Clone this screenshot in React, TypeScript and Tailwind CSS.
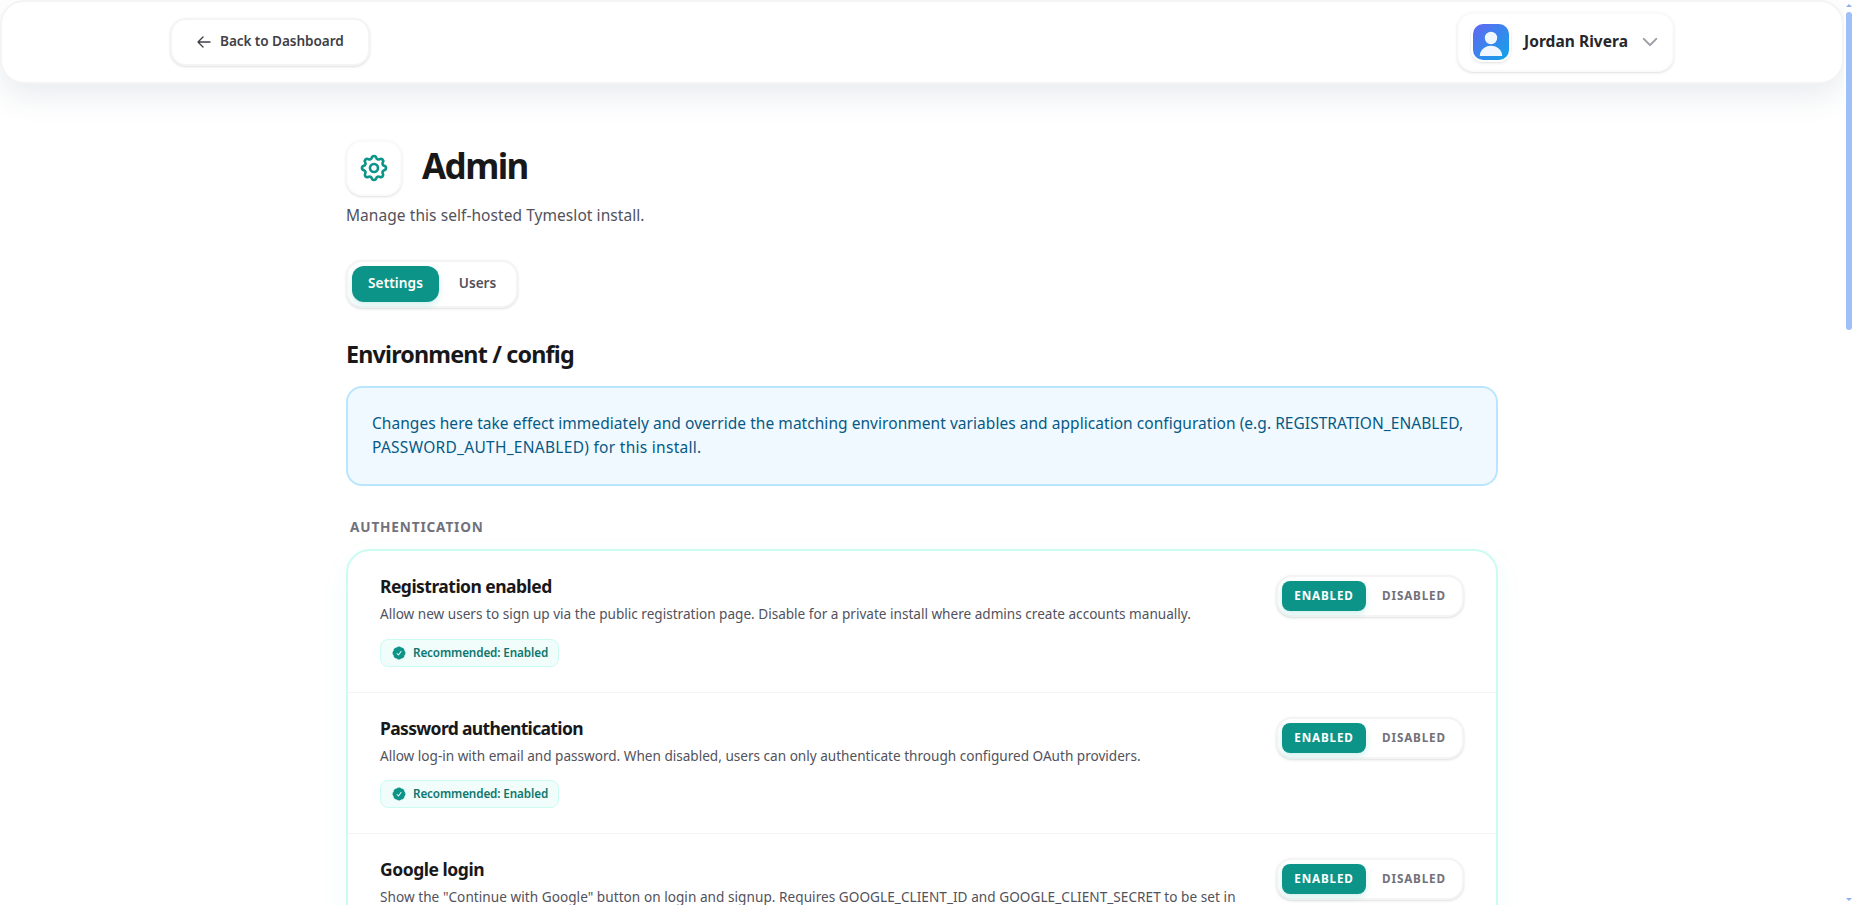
import { useState } from 'react'
import clsx from 'clsx'

type Setting = {
  id: string
  title: string
  titleClass: string
  description: string
  descriptionClass: string
}

const SETTINGS: Setting[] = [
  {
    id: 'registration',
    title: 'Registration enabled',
    titleClass: 'tracking-[-0.53px]',
    description:
      'Allow new users to sign up via the public registration page. Disable for a private install where admins create accounts manually.',
    descriptionClass: 'tracking-[-0.008px]',
  },
  {
    id: 'password',
    title: 'Password authentication',
    titleClass: 'tracking-[-0.66px]',
    description:
      'Allow log-in with email and password. When disabled, users can only authenticate through configured OAuth providers.',
    descriptionClass: 'tracking-[-0.008px]',
  },
  {
    id: 'google',
    title: 'Google login',
    titleClass: 'tracking-[-0.46px]',
    description:
      'Show the "Continue with Google" button on login and signup. Requires GOOGLE_CLIENT_ID and GOOGLE_CLIENT_SECRET to be set in',
    descriptionClass: 'tracking-[0.04px]',
  },
]

function CogIcon() {
  return (
    <svg className="size-8 text-[#0d9488]" viewBox="0 0 24 24" fill="none" stroke="currentColor" strokeWidth="2" strokeLinecap="round" strokeLinejoin="round">
      <path d="M10.325 4.317c.426-1.756 2.924-1.756 3.35 0a1.724 1.724 0 002.573 1.066c1.543-.94 3.31.826 2.37 2.37a1.724 1.724 0 001.065 2.572c1.756.426 1.756 2.924 0 3.35a1.724 1.724 0 00-1.066 2.573c.94 1.543-.826 3.31-2.37 2.37a1.724 1.724 0 00-2.572 1.065c-.426 1.756-2.924 1.756-3.35 0a1.724 1.724 0 00-2.573-1.066c-1.543.94-3.31-.826-2.37-2.37a1.724 1.724 0 00-1.065-2.572c-1.756-.426-1.756-2.924 0-3.35a1.724 1.724 0 001.066-2.573c-.94-1.543.826-3.31 2.37-2.37.996.608 2.296.07 2.572-1.065z" />
      <path d="M15 12a3 3 0 11-6 0 3 3 0 016 0z" />
    </svg>
  )
}

function CheckBadgeIcon() {
  return (
    <svg className="size-4 shrink-0 text-[#0d9488]" viewBox="0 0 24 24" fill="currentColor">
      <path
        fillRule="evenodd"
        clipRule="evenodd"
        d="M8.603 3.799A4.49 4.49 0 0 1 12 2.25c1.357 0 2.573.6 3.397 1.549a4.49 4.49 0 0 1 3.498 1.307 4.491 4.491 0 0 1 1.307 3.497A4.49 4.49 0 0 1 21.75 12a4.49 4.49 0 0 1-1.549 3.397 4.491 4.491 0 0 1-1.307 3.497 4.491 4.491 0 0 1-3.497 1.307A4.49 4.49 0 0 1 12 21.75a4.49 4.49 0 0 1-3.397-1.549 4.49 4.49 0 0 1-3.498-1.306 4.491 4.491 0 0 1-1.307-3.498A4.49 4.49 0 0 1 2.25 12c0-1.357.6-2.573 1.549-3.397a4.49 4.49 0 0 1 1.307-3.497 4.49 4.49 0 0 1 3.497-1.307Zm7.007 6.387a.75.75 0 1 0-1.22-.872l-3.236 4.53L9.53 12.22a.75.75 0 0 0-1.06 1.06l2.25 2.25a.75.75 0 0 0 1.14-.094l3.75-5.25Z"
      />
    </svg>
  )
}

function Avatar() {
  return (
    <div className="size-10 overflow-hidden rounded-xl border-2 border-white shadow-sm">
      <svg className="size-9" viewBox="0 0 36 36">
        <defs>
          <linearGradient id="avatar" x1="0" y1="0" x2="1" y2="1">
            <stop offset="0" stopColor="#6366f1" />
            <stop offset="1" stopColor="#0ea5e9" />
          </linearGradient>
        </defs>
        <rect width="36" height="36" fill="url(#avatar)" />
        <circle cx="18" cy="14" r="6.2" fill="#f0f7ff" />
        <path d="M6.8 32c0-5.8 5-10.2 11.2-10.2S29.200 26.200 29.200 32z" fill="#f0f7ff" />
      </svg>
    </div>
  )
}

function Header() {
  return (
    <header className="h-[84px] shrink-0 rounded-3xl border-2 border-zinc-100 bg-white shadow-[0_12px_32px_-2px_rgba(51,78,104,0.12)]">
      <div className="mx-auto flex h-full w-[1504px] items-center justify-between">
        <button className="flex h-12 w-[200px] items-center gap-2 rounded-2xl border-2 border-zinc-100 bg-white px-6 shadow-sm">
          <svg className="size-4 shrink-0 text-zinc-700" viewBox="0 0 24 24" fill="none" stroke="currentColor" strokeWidth="2" strokeLinecap="round" strokeLinejoin="round">
            <path d="M10.500 19.500L3 12m0 0l7.500-7.500M3 12h18" />
          </svg>
          <span className="pb-[3px] text-[13.6px] leading-5 font-semibold tracking-[-0.08px] whitespace-nowrap text-zinc-700">Back to Dashboard</span>
        </button>
        <button className="flex h-[60px] w-[217px] items-center gap-3 rounded-2xl border-2 border-zinc-50 bg-white px-3 shadow-sm">
          <Avatar />
          <span className="w-[105px] pb-[3px] pl-px text-left text-[15.5px] leading-6 font-bold tracking-[0.05px] whitespace-nowrap text-zinc-800">Jordan Rivera</span>
          <svg className="size-5 shrink-0 text-zinc-400" viewBox="0 0 24 24" fill="none" stroke="currentColor" strokeWidth="2.500" strokeLinecap="round" strokeLinejoin="round">
            <path d="M19.500 8.250l-7.500 7.500-7.500-7.500" />
          </svg>
        </button>
      </div>
    </header>
  )
}

function Tabs() {
  const [tab, setTab] = useState('settings')
  const tabClass = (id: string) =>
    clsx(
      'h-9 rounded-xl pb-[3px] text-[13.6px] leading-5 font-semibold',
      tab === id ? 'bg-[#0d9488] text-white shadow-[0_3px_6px_rgba(20,184,166,0.2)]' : 'text-zinc-600',
    )

  return (
    <div className="mt-[33px] flex h-12 w-[172px] gap-1 rounded-2xl border-2 border-zinc-100 bg-white p-1 shadow-sm">
      <button onClick={() => setTab('settings')} className={clsx(tabClass('settings'), 'w-[87px] tracking-[0.1px]')}>Settings</button>
      <button onClick={() => setTab('users')} className={clsx(tabClass('users'), 'w-[69px]')}>Users</button>
    </div>
  )
}

function Toggle() {
  const [on, setOn] = useState(true)
  const optionClass = (active: boolean) =>
    clsx(
      'h-[30px] rounded-lg pb-[2px] text-[11.7px] leading-4 font-bold tracking-[0.85px]',
      active ? 'bg-[#0d9488] text-white shadow-[0_3px_6px_rgba(20,184,166,0.2)]' : 'text-zinc-500',
    )

  return (
    <div className="flex h-[42px] w-[188px] shrink-0 gap-1 rounded-2xl border-2 border-zinc-100 bg-white p-1 shadow-sm">
      <button onClick={() => setOn(true)} className={clsx(optionClass(on), 'w-[84px]')}>ENABLED</button>
      <button onClick={() => setOn(false)} className={clsx(optionClass(!on), 'w-[88px]')}>DISABLED</button>
    </div>
  )
}

function SettingRow({ setting }: { setting: Setting }) {
  return (
    <div className="flex h-[141.500px] shrink-0 items-start justify-between border-b border-zinc-100 px-8 pt-6">
      <div>
        <h3 className={clsx('-mt-px text-[17.5px] leading-6 font-bold text-zinc-900', setting.titleClass)}>{setting.title}</h3>
        <p className={clsx('mt-1.5 text-[13.6px] leading-5 whitespace-nowrap text-zinc-600', setting.descriptionClass)}>{setting.description}</p>
        <div className="mt-[14.500px] flex h-7 w-[179px] items-center gap-1.5 rounded-lg border border-[#ccfbf1] bg-[#f0fdfa] pl-2.5">
          <CheckBadgeIcon />
          <span className="pb-[2px] text-[11.7px] leading-4 font-semibold tracking-[-0.12px] whitespace-nowrap text-[#0f766e]">Recommended: Enabled</span>
        </div>
      </div>
      <Toggle />
    </div>
  )
}

function Scrollbar() {
  return (
    <div className="flex w-2.5 shrink-0 flex-col items-center justify-between bg-white pt-1 pr-px pb-1">
      <div className="flex flex-col items-center gap-[5px]">
        <svg className="h-[3px] w-1.5" viewBox="0 0 6 3"><path d="M3 0l3 3H0z" fill="#8fb0f0" /></svg>
        <div className="h-[318px] w-1.5 rounded-full bg-[#9fbff9]" />
      </div>
      <svg className="h-[3px] w-1.5" viewBox="0 0 6 3"><path d="M0 0h6L3 3z" fill="#8fb0f0" /></svg>
    </div>
  )
}

export default function App() {
  return (
    <div className="flex h-screen overflow-hidden bg-white font-['Noto_Sans',sans-serif] antialiased">
      <div className="flex min-w-0 flex-1 flex-col">
        <Header />
        <main className="mx-auto flex w-[1152px] flex-1 flex-col pt-14">
          <div className="flex items-center gap-5">
            <div className="flex size-14 items-center justify-center rounded-2xl border-2 border-zinc-50 bg-white shadow-sm">
              <CogIcon />
            </div>
            <h1 className="pb-1 text-[35px] leading-10 font-bold tracking-[-1.6px] text-zinc-900">Admin</h1>
          </div>
          <p className="mt-[7px] text-[15.5px] leading-6 tracking-[0.06px] text-zinc-600">Manage this self-hosted Tymeslot install.</p>

          <Tabs />

          <h2 className="mt-[30px] text-[23.3px] leading-8 font-bold tracking-[-0.82px] text-zinc-900">Environment / config</h2>

          <div className="mt-4 rounded-2xl border-2 border-[#bae6fd] bg-[#f0f9ff] px-6 pt-[23px] pb-[25px] text-[15.5px] leading-6 whitespace-nowrap text-[#075985]">
            <p className="tracking-[0.045px]">
              Changes here take effect immediately and override the matching environment variables and application configuration (e.g. REGISTRATION_ENABLED,
            </p>
            <p className="tracking-[0.28px]">PASSWORD_AUTH_ENABLED) for this install.</p>
          </div>

          <h4 className="mt-[31px] px-1 text-[13.6px] leading-5 font-bold tracking-[0.85px] text-zinc-500">AUTHENTICATION</h4>

          <div className="mt-3 flex h-[500px] shrink-0 flex-col rounded-3xl border-2 border-[#ccfbf1] bg-white shadow-[0_10px_30px_rgba(20,184,166,0.05)]">
            {SETTINGS.map((s) => (
              <SettingRow key={s.id} setting={s} />
            ))}
          </div>
        </main>
      </div>
      <Scrollbar />
    </div>
  )
}
